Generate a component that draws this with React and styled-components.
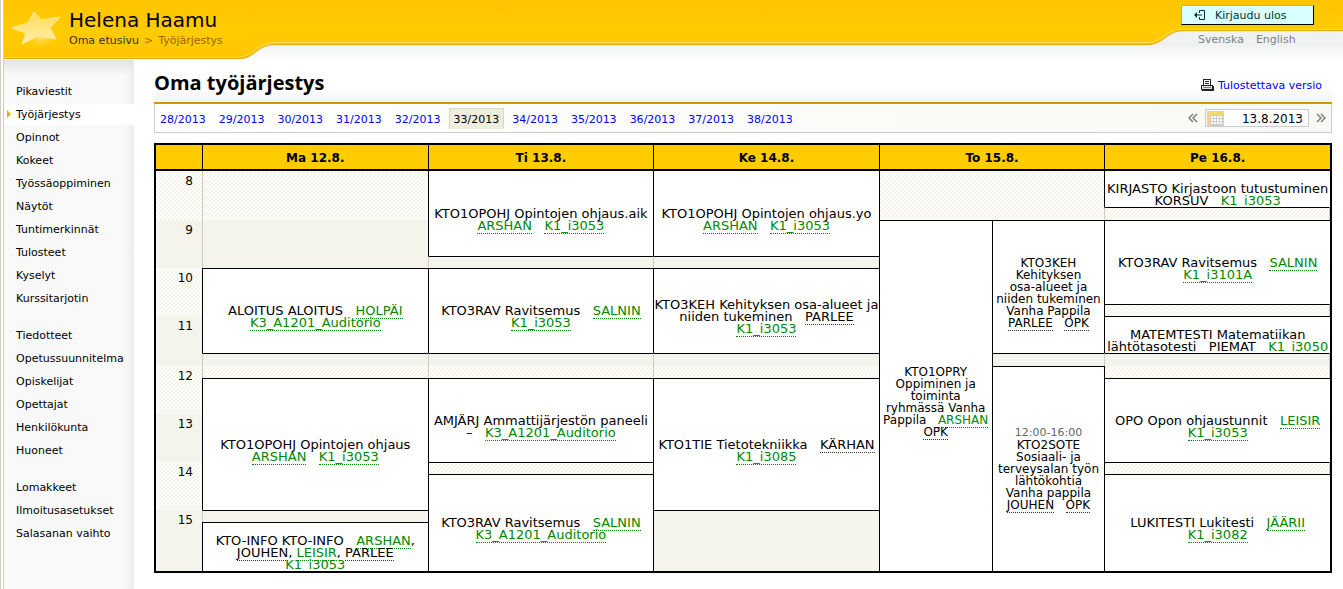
import React from 'react';
import styled, { createGlobalStyle } from 'styled-components';

const GlobalStyle = createGlobalStyle`
  * {
    box-sizing: border-box;
  }
  body {
    margin: 0;
    background: #fff;
    color: #000;
    font-family: "DejaVu Sans", Verdana, sans-serif;
    font-size: 11px;
  }
  a {
    color: inherit;
    text-decoration: none;
  }
`;

const Page = styled.div`
  min-height: 100vh;
  display: flex;
  flex-direction: column;
  border-left: 4px double #d4ccc0;
`;

/* ---------- header ---------- */

const Header = styled.header`
  display: flex;
  height: 60px;
`;

const HeaderPart = styled.div`
  position: relative;
  z-index: 0;
  width: ${(props) => props.$width};
  flex: ${(props) => (props.$width ? 'none' : '1')};
`;

const Backdrop = styled.svg`
  position: absolute;
  top: 0;
  left: 0;
  z-index: -1;
  width: 100%;
  height: 60px;
`;

const Brand = styled.div`
  display: flex;
  gap: 8px;
  padding: 8px 0 0 7px;
`;

const BrandText = styled.div`
  display: flex;
  flex-direction: column;
`;

const UserName = styled.div`
  font-size: 20px;
  line-height: 24px;
`;

const Crumbs = styled.nav`
  display: flex;
  gap: 5px;
  line-height: 18px;
  color: #996600;
`;

const CrumbLink = styled.a`
  color: #333;
`;

const Account = styled.div`
  display: flex;
  flex-direction: column;
  padding: 5px 0 0 41px;
`;

const Logout = styled.button`
  display: flex;
  align-items: center;
  gap: 9px;
  width: 133px;
  height: 20px;
  padding: 0 11px;
  border: 1px solid #aaa;
  border-right-color: #000;
  border-bottom-color: #000;
  background: #d9ffff;
  color: #003333;
  font-family: inherit;
  font-size: 11px;
`;

const Languages = styled.div`
  display: flex;
  gap: 12px;
  padding: 7px 17px;
  line-height: 16px;
  color: #808080;
`;

/* ---------- body ---------- */

const Body = styled.div`
  flex: 1;
  display: flex;
`;

const Sidebar = styled.nav`
  width: 130px;
  flex: none;
  padding-top: 20px;
  background:
    linear-gradient(#e4e4e4, transparent) 0 0 / 100% 16px no-repeat,
    linear-gradient(to right, #f9f9f9 121px, #ececec 130px);
`;

const MenuGroup = styled.ul`
  list-style: none;
  margin: 0 0 14px;
  padding: 0;
`;

const MenuItem = styled.li`
  position: relative;
  height: 23px;
  padding-left: 12px;
  line-height: 23px;
`;

const ActiveItem = styled(MenuItem)`
  height: 21px;
  margin: 1px 0;
  line-height: 21px;
  background: #fff;
`;

const ActiveMark = styled.svg`
  position: absolute;
  left: 3px;
  top: 6px;
`;

const Main = styled.main`
  flex: 1;
  min-width: 0;
  padding: 0 11px 16px 20px;
`;

const TitleRow = styled.div`
  display: flex;
  justify-content: space-between;
  height: 44px;
  padding-right: 10px;
  border-bottom: 2px solid #cc9900;
  background: linear-gradient(#fff 28px, #f3f3f3);
`;

const Title = styled.h1`
  margin: 0;
  padding-top: 10px;
  font-family: "Open Sans", Tahoma, sans-serif;
  font-size: 20px;
  line-height: 26px;
`;

const PrintLink = styled.a`
  display: flex;
  gap: 4px;
  padding-top: 18px;
  line-height: 16px;
  color: #0000ff;
`;

const WeekBar = styled.div`
  display: flex;
  justify-content: space-between;
  align-items: center;
  height: 29px;
  margin-bottom: 10px;
  padding: 0 5px 0 0;
  border: 1px solid #ccc;
  border-top: 0;
  background: linear-gradient(to right, #fff, #f8f8f4);
`;

const Weeks = styled.div`
  display: flex;
  gap: 3px;
`;

const Week = styled.a`
  padding: 2px 4px 0;
  border: 1px solid ${(props) => (props.$active ? '#d8d8c0' : 'transparent')};
  border-bottom: 0;
  line-height: 18px;
  background: ${(props) => (props.$active ? '#eeeedd' : 'transparent')};
  color: ${(props) => (props.$active ? '#000' : '#0000ff')};
`;

const DatePicker = styled.div`
  display: flex;
  align-items: center;
  gap: 7px;
`;

const Step = styled.button`
  display: flex;
  padding: 0;
  border: 0;
  background: none;
`;

const DateField = styled.label`
  display: flex;
  align-items: center;
  width: 104px;
  height: 18px;
  padding: 0 5px 0 1px;
  border: 1px solid #ccc;
  background: #fff;
`;

const DateInput = styled.input`
  flex: 1;
  width: 100%;
  min-width: 0;
  padding: 1px 0 0;
  border: 0;
  background: none;
  text-align: right;
  font-family: inherit;
  font-size: 12px;
`;

/* ---------- timetable ---------- */

const Timetable = styled.table`
  width: 100%;
  table-layout: fixed;
  border: 2px solid #000;
  border-collapse: separate;
  border-spacing: 0;
  font-size: 13px;
  line-height: 12px;
`;

const HourCol = styled.col`
  width: 46px;
`;

const DayHead = styled.th`
  height: 26px;
  padding: 2px 0 0;
  border-bottom: 2px solid #000;
  border-left: ${(props) => (props.$first ? '0' : '1px solid #000')};
  background: #ffcc00;
  font-size: 12px;
`;

const QuarterRow = styled.tr`
  height: ${(props) => (props.$tall ? '13px' : '12px')};
`;

const stripes =
  'linear-gradient(135deg, #eeeed8 0 18%, #fff 18% 50%, #eeeed8 50% 68%, #fff 68%) 0 0 / 4px 4px';

const Hour = styled.th`
  padding: 4px 9px 0 0;
  background: ${(props) => (props.$striped ? stripes : '#f4f4ec')};
  font-size: 12px;
  font-weight: normal;
  text-align: right;
  vertical-align: top;
`;

const Gap = styled.td`
  padding: 0;
  border-left: 1px solid ${(props) => (props.$afterLesson ? '#000' : '#ccccbb')};
  border-right: ${(props) => (props.$last ? '1px solid #ccccbb' : '0')};
  border-top: ${(props) => (props.$belowLesson ? '1px solid #000' : '0')};
  background: ${(props) => (props.$striped ? stripes : '#f4f4ec')};
`;

const Lesson = styled.td`
  padding: 0;
  overflow: hidden;
  border-left: 1px solid #000;
  border-top: ${(props) => (props.$first ? '0' : '1px solid #000')};
  font-size: ${(props) => (props.$narrow ? '12px' : '13px')};
  text-align: center;
  vertical-align: middle;
  white-space: pre-wrap;
`;

const LessonTime = styled.div`
  height: 12px;
  font-size: 11px;
  color: #666;
`;

const Ref = styled.a`
  border-bottom: 1px dotted ${(props) => (props.$linked ? '#008800' : '#333')};
  color: ${(props) => (props.$linked ? '#008800' : '#000')};
`;

const MENU = [
  ['Pikaviestit', 'Työjärjestys', 'Opinnot', 'Kokeet', 'Työssäoppiminen', 'Näytöt', 'Tuntimerkinnät', 'Tulosteet', 'Kyselyt', 'Kurssitarjotin'],
  ['Tiedotteet', 'Opetussuunnitelma', 'Opiskelijat', 'Opettajat', 'Henkilökunta', 'Huoneet'],
  ['Lomakkeet', 'Ilmoitusasetukset', 'Salasanan vaihto'],
];

const WEEKS = [28, 29, 30, 31, 32, 33, 34, 35, 36, 37, 38];
const DAYS = ['Ma 12.8.', 'Ti 13.8.', 'Ke 14.8.', 'To 15.8.', 'Pe 16.8.'];

// the day is cut in quarters of an hour, counted from 8:00
const QUARTERS = 33;
const TALL_ROWS = [3, 14, 15, 32];
const HALF_COLS = 10;

// A name with a leading * has a page of its own and is shown in green.
const LESSONS = [
  { col: 0, span: 2, from: 8, to: 15, name: 'ALOITUS ALOITUS', who: ['*HOLPÄI'], room: '*K3_A1201_Auditorio' },
  { col: 0, span: 2, from: 17, to: 28, name: 'KTO1OPOHJ Opintojen ohjaus', who: ['*ARSHAN'], room: '*K1_i3053' },
  { col: 0, span: 2, from: 29, to: 33, name: 'KTO-INFO KTO-INFO', who: ['*ARSHAN', 'JOUHEN', '*LEISIR', 'PARLEE'], room: '*K1_i3053' },
  { col: 2, span: 2, from: 0, to: 7, name: 'KTO1OPOHJ Opintojen ohjaus.aik', who: ['*ARSHAN'], room: '*K1_i3053' },
  { col: 2, span: 2, from: 8, to: 15, name: 'KTO3RAV Ravitsemus', who: ['*SALNIN'], room: '*K1_i3053' },
  { col: 2, span: 2, from: 17, to: 24, name: 'AMJÄRJ Ammattijärjestön paneeli –', who: [], room: '*K3_A1201_Auditorio' },
  { col: 2, span: 2, from: 25, to: 33, name: 'KTO3RAV Ravitsemus', who: ['*SALNIN'], room: '*K3_A1201_Auditorio' },
  { col: 4, span: 2, from: 0, to: 7, name: 'KTO1OPOHJ Opintojen ohjaus.yo', who: ['*ARSHAN'], room: '*K1_i3053' },
  { col: 4, span: 2, from: 8, to: 15, name: 'KTO3KEH Kehityksen osa-alueet ja niiden tukeminen', who: ['PARLEE'], room: '*K1_i3053' },
  { col: 4, span: 2, from: 17, to: 28, name: 'KTO1TIE Tietotekniikka', who: ['KÄRHAN'], room: '*K1_i3085' },
  { col: 6, span: 1, from: 4, to: 33, name: 'KTO1OPRY\nOppiminen ja\ntoiminta\nryhmässä Vanha\nPappila', who: ['*ARSHAN'], room: 'OPK' },
  { col: 7, span: 1, from: 4, to: 15, name: 'KTO3KEH\nKehityksen\nosa-alueet ja\nniiden tukeminen\nVanha Pappila', who: ['PARLEE'], room: 'OPK' },
  { col: 7, span: 1, from: 16, to: 33, time: '12:00-16:00', name: 'KTO2SOTE\nSosiaali- ja\nterveysalan työn\nlähtökohtia\nVanha pappila', who: ['JOUHEN'], room: 'OPK' },
  { col: 8, span: 2, from: 0, to: 3, name: 'KIRJASTO Kirjastoon tutustuminen', who: ['KORSUV'], room: '*K1_i3053' },
  { col: 8, span: 2, from: 4, to: 11, name: 'KTO3RAV Ravitsemus', who: ['*SALNIN'], room: '*K1_i3101A' },
  { col: 8, span: 2, from: 12, to: 15, name: 'MATEMTESTI Matematiikan lähtötasotesti', who: ['PIEMAT'], room: '*K1_i3050' },
  { col: 8, span: 2, from: 17, to: 24, name: 'OPO Opon ohjaustunnit', who: ['*LEISIR'], room: '*K1_i3053' },
  { col: 8, span: 2, from: 25, to: 33, name: 'LUKITESTI Lukitesti', who: ['*JÄÄRII'], room: '*K1_i3082' },
];

const lessonAt = (row, col) =>
  LESSONS.find((l) => row >= l.from && row < l.to && col >= l.col && col < l.col + l.span);

const hourOf = (row) => Math.min(Math.floor(row / 4), 7);

const gapWidth = (row, col) => (col === 7 || lessonAt(row, col + 1) ? 1 : 2);

// number of quarters from this row that stay free within the same hour
const gapHeight = (row, col) => {
  let end = row + 1;
  while (end < QUARTERS && hourOf(end) === hourOf(row) && !lessonAt(end, col)) end += 1;
  return end - row;
};

const Reference = ({ name }) => {
  const linked = name.startsWith('*');
  return <Ref href="#" $linked={linked}>{linked ? name.slice(1) : name}</Ref>;
};

const renderCell = (row, col) => {
  const lesson = lessonAt(row, col);
  if (lesson) {
    if (lesson.from !== row || lesson.col !== col) return null;
    return (
      <Lesson
        key={col}
        colSpan={lesson.span}
        rowSpan={lesson.to - lesson.from}
        $first={row === 0}
        $narrow={lesson.span === 1}
      >
        <LessonTime>{lesson.time}</LessonTime>
        {lesson.name}
        {lesson.who.map((who, i) => (
          <React.Fragment key={who}>
            {i === 0 ? '   ' : ', '}
            <Reference name={who} />
          </React.Fragment>
        ))}
        {'   '}
        <Reference name={lesson.room} />
      </Lesson>
    );
  }
  const starts = (row % 4 === 0 && row < 32) || (row > 0 && lessonAt(row - 1, col));
  const covered = col % 2 === 1 && gapWidth(row, col - 1) === 2 && !lessonAt(row, col - 1);
  if (!starts || covered) return null;
  return (
    <Gap
      key={col}
      colSpan={gapWidth(row, col)}
      rowSpan={gapHeight(row, col)}
      $striped={hourOf(row) % 2 === 0}
      $afterLesson={col > 0 && Boolean(lessonAt(row, col - 1))}
      $belowLesson={row > 0 && Boolean(lessonAt(row - 1, col))}
      $last={col + gapWidth(row, col) === HALF_COLS}
    />
  );
};

/* ---------- drawings ---------- */

const HeaderGradients = () => (
  <defs>
    <linearGradient id="gold" x1="0" y1="0" x2="0" y2="60" gradientUnits="userSpaceOnUse">
      <stop offset="0" stopColor="#ffc400" />
      <stop offset="0.5" stopColor="#ffcc00" />
      <stop offset="1" stopColor="#ffc400" />
    </linearGradient>
    <linearGradient id="mist" x1="0" y1="30" x2="0" y2="60" gradientUnits="userSpaceOnUse">
      <stop offset="0" stopColor="#f0f2f2" />
      <stop offset="0.5" stopColor="#f0f2f2" />
      <stop offset="1" stopColor="#fff" />
    </linearGradient>
  </defs>
);

const HeaderLeft = () => (
  <Backdrop viewBox="0 0 280 60" preserveAspectRatio="none">
    <HeaderGradients />
    <rect width="280" height="60" fill="url(#mist)" />
    <path d="M0 0H280V44H271C252 44 252 58 236 59H0Z" fill="url(#gold)" />
    <path d="M0 57.5H234C250 56 252 42.500 271 42.500H280" fill="none" stroke="#ffdc60" />
    <path d="M0 58.5H236C252 57.500 253 44.500 271 44.500H280" fill="none" stroke="#e8a800" />
  </Backdrop>
);

const HeaderMiddle = () => (
  <Backdrop viewBox="0 0 100 60" preserveAspectRatio="none">
    <rect width="100" height="60" fill="url(#mist)" />
    <rect width="100" height="44" fill="url(#gold)" />
    <rect y="42" width="100" height="1" fill="#ffdc60" />
    <rect y="44" width="100" height="1" fill="#e8a800" />
  </Backdrop>
);

const HeaderRight = () => (
  <Backdrop viewBox="0 0 203 60" preserveAspectRatio="none">
    <rect width="203" height="60" fill="url(#mist)" />
    <path d="M0 0H203V31H43C25 31 24 44 8 45H0Z" fill="url(#gold)" />
    <path d="M0 42.500H8C23 42 25 29.500 43 29.500H203" fill="none" stroke="#ffdc60" />
    <path d="M0 44.500H8C25 44 26 31 43 30.500H203" fill="none" stroke="#e8a800" />
  </Backdrop>
);

const StarIcon = () => (
  <svg width="50" height="42" viewBox="0 0 50 42">
    <defs>
      <radialGradient id="glow">
        <stop offset="0" stopColor="#ffe680" />
        <stop offset="1" stopColor="#ffcc00" stopOpacity="0" />
      </radialGradient>
      <linearGradient id="star" x1="0" y1="0" x2="0" y2="1">
        <stop offset="0" stopColor="#ffdc58" />
        <stop offset="1" stopColor="#ffeeaa" />
      </linearGradient>
    </defs>
    <ellipse cx="30" cy="29" rx="18" ry="13" fill="url(#glow)" />
    <path
      d="M23 4L30 12L49 9L39 20L45 31L27 28L11 36L15 25L1 20L17 15Z"
      fill="url(#star)"
      stroke="#ffec9c"
      strokeLinejoin="round"
    />
  </svg>
);

const LogoutIcon = () => (
  <svg width="13" height="12" viewBox="0 0 13 12" fill="none" stroke="#003333">
    <path d="M6.500 4V1.500H11.500V10.500H6.500V8" />
    <path d="M1 6H9" />
    <path d="M3.500 3.500V8.500M2.500 4.500V7.500" />
  </svg>
);

const PrinterIcon = () => (
  <svg width="14" height="14" viewBox="0 0 14 14" shapeRendering="crispEdges">
    <path d="M3.500 7.500V1.500H10.500V7.500" fill="#fff" stroke="#222" />
    <path d="M5 3.500H9M5 5.500H9" stroke="#222" />
    <path d="M1.500 7.500H12.500V11.500H1.500Z" fill="#ddd" stroke="#222" />
    <path d="M2 12.500H13.500V8" fill="none" stroke="#222" />
    <path d="M3 9.500H11" stroke="#888" />
  </svg>
);

const CalendarIcon = () => (
  <svg width="17" height="15" viewBox="0 0 17 15" shapeRendering="crispEdges">
    <rect width="17" height="15" fill="#f0d878" />
    <rect x="3" y="4" width="13" height="11" fill="#ccc" />
    <path
      d="M4 5h2v2h-2zM7 5h2v2h-2zM10 5h2v2h-2zM13 5h2v2h-2zM4 8h2v2h-2zM7 8h2v2h-2zM10 8h2v2h-2zM13 8h2v2h-2zM4 11h2v2h-2zM7 11h2v2h-2zM10 11h2v2h-2zM13 11h2v2h-2z"
      fill="#fff"
    />
  </svg>
);

const ChevronsIcon = ({ direction }) => (
  <svg width="10" height="10" viewBox="0 0 10 10" fill="none" stroke="#777" strokeWidth="1.4">
    <path d={direction === 'left' ? 'M5 1L1 5L5 9M9 1L5 5L9 9' : 'M1 1L5 5L1 9M5 1L9 5L5 9'} />
  </svg>
);

const App = () => {
  return (
    <Page>
      <GlobalStyle />
      <Header>
        <HeaderPart $width="280px">
          <HeaderLeft />
          <Brand>
            <StarIcon />
            <BrandText>
              <UserName>Helena Haamu</UserName>
              <Crumbs>
                <CrumbLink href="#">Oma etusivu</CrumbLink>
                <span>&gt;</span>
                <span>Työjärjestys</span>
              </Crumbs>
            </BrandText>
          </Brand>
        </HeaderPart>
        <HeaderPart>
          <HeaderMiddle />
        </HeaderPart>
        <HeaderPart $width="203px">
          <HeaderRight />
          <Account>
            <Logout type="button">
              <LogoutIcon />
              Kirjaudu ulos
            </Logout>
            <Languages>
              <a href="#">Svenska</a>
              <a href="#">English</a>
            </Languages>
          </Account>
        </HeaderPart>
      </Header>
      <Body>
        <Sidebar>
          {MENU.map((group) => (
            <MenuGroup key={group[0]}>
              {group.map((item) =>
                item === 'Työjärjestys' ? (
                  <ActiveItem key={item}>
                    <ActiveMark width="4" height="8" viewBox="0 0 4 8">
                      <path d="M0 0L4 4L0 8Z" fill="#e8b000" />
                    </ActiveMark>
                    <a href="#">{item}</a>
                  </ActiveItem>
                ) : (
                  <MenuItem key={item}>
                    <a href="#">{item}</a>
                  </MenuItem>
                )
              )}
            </MenuGroup>
          ))}
        </Sidebar>
        <Main>
          <TitleRow>
            <Title>Oma työjärjestys</Title>
            <PrintLink href="#">
              <PrinterIcon />
              Tulostettava versio
            </PrintLink>
          </TitleRow>
          <WeekBar>
            <Weeks>
              {WEEKS.map((week) => (
                <Week key={week} href="#" $active={week === 33}>{week}/2013</Week>
              ))}
            </Weeks>
            <DatePicker>
              <Step type="button" aria-label="Edellinen viikko">
                <ChevronsIcon direction="left" />
              </Step>
              <DateField>
                <CalendarIcon />
                <DateInput type="text" aria-label="Päivä" defaultValue="13.8.2013" />
              </DateField>
              <Step type="button" aria-label="Seuraava viikko">
                <ChevronsIcon direction="right" />
              </Step>
            </DatePicker>
          </WeekBar>
          <Timetable>
            <colgroup>
              <HourCol />
              {Array.from({ length: HALF_COLS }, (_, i) => <col key={i} />)}
            </colgroup>
            <thead>
              <tr>
                <DayHead $first />
                {DAYS.map((day) => <DayHead key={day} colSpan={2} scope="col">{day}</DayHead>)}
              </tr>
            </thead>
            <tbody>
              {Array.from({ length: QUARTERS }, (_, row) => (
                <QuarterRow key={row} $tall={TALL_ROWS.includes(row)}>
                  {row % 4 === 0 && row < 32 && (
                    <Hour scope="row" rowSpan={row === 28 ? 5 : 4} $striped={hourOf(row) % 2 === 0}>
                      {8 + row / 4}
                    </Hour>
                  )}
                  {Array.from({ length: HALF_COLS }, (_, col) => renderCell(row, col))}
                </QuarterRow>
              ))}
            </tbody>
          </Timetable>
        </Main>
      </Body>
    </Page>
  );
};

export default App;
